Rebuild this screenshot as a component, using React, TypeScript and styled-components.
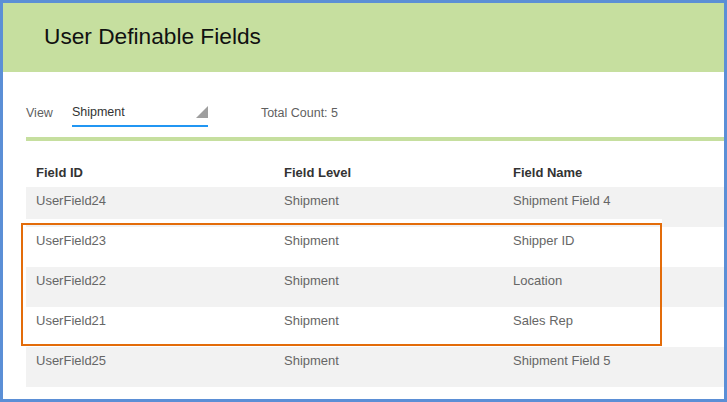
import React from "react";
import styled, { createGlobalStyle } from "styled-components";

const GlobalStyle = createGlobalStyle`
  html, body { margin: 0; padding: 0; background: #ffffff; }
  body { font-family: "Liberation Sans", Arial, sans-serif; }
  * { box-sizing: border-box; }
`;

const Frame = styled.div`
  width: 727px;
  height: 402px;
  border: 3px solid #5b8fd6;
  background: #ffffff;
  display: flex;
  flex-direction: column;
  overflow: hidden;
`;

const Header = styled.header`
  height: 69px;
  flex: none;
  background: #c6df9f;
  display: flex;
  align-items: center;
  padding: 0 0 2px 41px;
`;

const Title = styled.h1`
  margin: 0;
  font-size: 22.7px;
  font-weight: 400;
  color: #111111;
`;

const Content = styled.main`
  padding-left: 23px;
  display: flex;
  flex-direction: column;
`;

const Toolbar = styled.div`
  margin-top: 33px;
  display: flex;
  align-items: flex-start;
`;

const Label = styled.span<{ $gap?: number }>`
  font-size: 12.5px;
  line-height: 16px;
  color: #5f5f5f;
  margin-right: ${(p) => p.$gap ?? 0}px;
`;

const Select = styled.div`
  width: 136px;
  display: flex;
  justify-content: space-between;
  align-items: flex-start;
  padding-bottom: 5px;
  border-bottom: 2px solid #2196f3;
  margin-right: 53px;
`;

const SelectValue = styled.span`
  font-size: 12.5px;
  line-height: 16px;
  color: #333333;
  margin-top: -1px;
`;

const Arrow = styled.svg`
  display: block;
  margin-top: 1px;
  flex: none;
`;

const Divider = styled.div`
  margin-top: 10px;
  height: 4px;
  background: #c6df9f;
`;

const Table = styled.div`
  display: flex;
  flex-direction: column;
`;

const Row = styled.div<{ $shade?: boolean }>`
  display: grid;
  grid-template-columns: 248px 229px 1fr;
  height: 40px;
  background: ${(p) => (p.$shade ? "#f2f2f2" : "#ffffff")};
`;

const HeadRow = styled(Row)`
  height: 46px;
  align-items: end;
`;

const HeadCell = styled.div`
  padding: 0 10px 6px;
  font-size: 13px;
  line-height: 16px;
  font-weight: 700;
  color: #333333;
`;

const Cell = styled.div`
  padding: 6px 10px 0;
  font-size: 13px;
  line-height: 16px;
  color: #666666;
`;

const Body = styled.div`
  position: relative;
  display: flex;
  flex-direction: column;
`;

const Highlight = styled.div`
  position: absolute;
  left: -5px;
  top: 36px;
  width: 641px;
  height: 123px;
  border: 2px solid #e36c0a;
  box-shadow: 0 -4px 0 #ffffff;
  pointer-events: none;
`;

const rows = [
  ["UserField24", "Shipment", "Shipment Field 4"],
  ["UserField23", "Shipment", "Shipper ID"],
  ["UserField22", "Shipment", "Location"],
  ["UserField21", "Shipment", "Sales Rep"],
  ["UserField25", "Shipment", "Shipment Field 5"],
];

export default function App() {
  return (
    <>
      <GlobalStyle />
      <Frame>
        <Header>
          <Title>User Definable Fields</Title>
        </Header>
        <Content>
          <Toolbar>
            <Label $gap={19}>View</Label>
            <Select>
              <SelectValue>Shipment</SelectValue>
              <Arrow width="12" height="12" viewBox="0 0 12 12">
                <polygon points="12,0 12,12 0,12" fill="#9e9e9e" />
              </Arrow>
            </Select>
            <Label>Total Count: 5</Label>
          </Toolbar>
          <Divider />
          <Table>
            <HeadRow>
              <HeadCell>Field ID</HeadCell>
              <HeadCell>Field Level</HeadCell>
              <HeadCell>Field Name</HeadCell>
            </HeadRow>
            <Body>
              {rows.map((r, i) => (
                <Row key={r[0]} $shade={i % 2 === 0}>
                  {r.map((c, j) => (
                    <Cell key={j}>{c}</Cell>
                  ))}
                </Row>
              ))}
              <Highlight />
            </Body>
          </Table>
        </Content>
      </Frame>
    </>
  );
}
